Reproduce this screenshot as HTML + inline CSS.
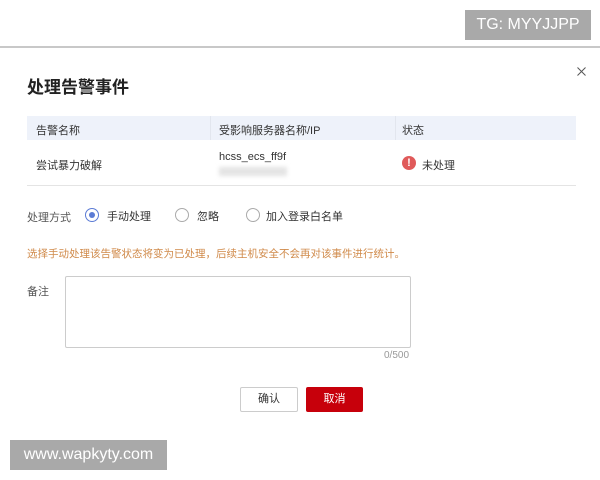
<!DOCTYPE html>
<html><head><meta charset="utf-8"><style>
*{margin:0;padding:0;box-sizing:border-box}
body{width:600px;height:480px;background:#fff;position:relative;overflow:hidden;font-family:"Liberation Sans","Noto Sans CJK SC",sans-serif;color:#333;font-size:11px}
.a{position:absolute;white-space:nowrap}
.radio{position:absolute;width:14px;height:14px;border:1px solid #aaa;border-radius:50%;background:#fff}
</style></head><body>
<div class="a" style="left:465px;top:10px;width:126px;height:30px;background:#a9a9a9;color:#fff;font-size:16px;line-height:30px;text-align:center">TG: MYYJJPP</div>
<div class="a" style="left:0;top:46px;width:600px;height:2px;background:#c8c8c8"></div>
<div class="a" style="left:27px;top:73px;font-size:17px;font-weight:bold;color:#222">处理告警事件</div>
<svg class="a" style="left:577px;top:67px" width="9" height="9" viewBox="0 0 9 9"><path d="M0.5 0.5L8.5 8.5M8.5 0.5L0.5 8.5" stroke="#555" stroke-width="1"/></svg>
<div class="a" style="left:27px;top:116px;width:549px;height:24px;background:#eef2fa"></div>
<div class="a" style="left:210px;top:116px;width:1px;height:24px;background:#e2e6ee"></div>
<div class="a" style="left:395px;top:116px;width:1px;height:24px;background:#e2e6ee"></div>
<div class="a" style="left:36px;top:122px">告警名称</div>
<div class="a" style="left:219px;top:122px">受影响服务器名称/IP</div>
<div class="a" style="left:402px;top:122px">状态</div>
<div class="a" style="left:36px;top:157px">尝试暴力破解</div>
<div class="a" style="left:219px;top:151px">hcss_ecs_ff9f</div>
<div class="a" style="left:219px;top:167px;width:68px;height:9px;background:#e4e4e4;filter:blur(2px)"></div>
<div class="a" style="left:402px;top:156px;width:14px;height:14px;border-radius:50%;background:#e05a5a;color:#fff;font-size:11px;font-weight:bold;line-height:14px;text-align:center">!</div>
<div class="a" style="left:422px;top:157px">未处理</div>
<div class="a" style="left:27px;top:185px;width:549px;height:1px;background:#e4e4e4"></div>
<div class="a" style="left:27px;top:209px;color:#555">处理方式</div>
<div class="radio" style="left:85px;top:208px;border-color:#5b7bd5"></div>
<div class="a" style="left:89px;top:212px;width:6px;height:6px;border-radius:50%;background:#5b7bd5"></div>
<div class="a" style="left:107px;top:208px">手动处理</div>
<div class="radio" style="left:175px;top:208px"></div>
<div class="a" style="left:197px;top:208px">忽略</div>
<div class="radio" style="left:246px;top:208px"></div>
<div class="a" style="left:266px;top:208px">加入登录白名单</div>
<div class="a" style="left:27px;top:246px;color:#d08a4a;font-size:10.5px">选择手动处理该告警状态将变为已处理，后续主机安全不会再对该事件进行统计。</div>
<div class="a" style="left:27px;top:283px;color:#555">备注</div>
<div class="a" style="left:65px;top:276px;width:346px;height:72px;border:1px solid #ccc;border-radius:2px"></div>
<div class="a" style="left:384px;top:350px;color:#999;font-size:10px">0/500</div>
<div class="a" style="left:240px;top:387px;width:58px;height:25px;border:1px solid #ccc;border-radius:2px;text-align:center;line-height:23px">确认</div>
<div class="a" style="left:306px;top:387px;width:57px;height:25px;background:#c7000b;border-radius:2px;color:#fff;text-align:center;line-height:25px">取消</div>
<div class="a" style="left:10px;top:440px;width:157px;height:30px;background:#a9a9a9;color:#fff;font-size:16px;line-height:30px;text-align:center">www.wapkyty.com</div>
</body></html>
